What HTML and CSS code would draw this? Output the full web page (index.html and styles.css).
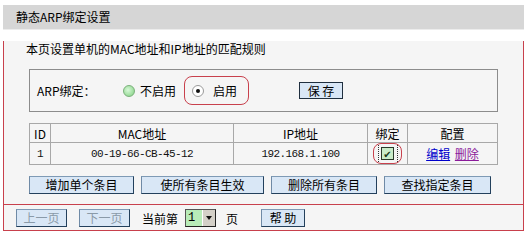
FILE: index.html
```html
<!DOCTYPE html>
<html lang="zh-CN">
<head>
    <meta charset="UTF-8">
    <title>静态ARP绑定设置</title>
    <link rel="stylesheet" href="styles.css">
</head>
<body>
  <div class="panel">
    <div class="title">静态ARP绑定设置</div>
    <div class="main">
      <p class="intro">本页设置单机的MAC地址和IP地址的匹配规则</p>

      <div class="bind-box">
        <span class="label">ARP绑定：</span>
        <label class="opt opt-off"><span class="radio radio-green"></span>不启用</label>
        <label class="opt opt-on"><span class="radio radio-checked"></span>启用</label>
        <button class="btn btn-save">保 存</button>
      </div>

      <table class="arp">
        <tr class="head">
          <th class="c-id">ID</th>
          <th class="c-mac">MAC地址</th>
          <th class="c-ip">IP地址</th>
          <th class="c-bind">绑定</th>
          <th class="c-conf">配置</th>
        </tr>
        <tr class="row">
          <td class="mono">1</td>
          <td class="mono">00-19-66-CB-45-12</td>
          <td class="mono">192.168.1.100</td>
          <td><span class="mark"><span class="focus"><span class="check">✔</span></span></span></td>
          <td><a href="#" class="edit">编辑</a> <a href="#" class="del">删除</a></td>
        </tr>
      </table>

      <div class="actions">
        <button class="btn b1">增加单个条目</button>
        <button class="btn b2">使所有条目生效</button>
        <button class="btn b3">删除所有条目</button>
        <button class="btn b4">查找指定条目</button>
      </div>

      <div class="pager">
        <button class="btn btn-page disabled">上一页</button>
        <button class="btn btn-page disabled">下一页</button>
        <span class="cur">当前第</span>
        <span class="select"><span class="val">1</span><span class="arrow"></span></span>
        <span class="cur">页</span>
        <button class="btn btn-help">帮 助</button>
      </div>
    </div>
  </div>
</body>
</html>
```

FILE: styles.css
```css
body {
    margin: 0;
    background-color: #ffffff;
    font-family: "Noto Sans CJK SC", "DejaVu Sans", sans-serif;
    font-size: 12px;
    color: #000;
}

.panel {
    width: 521px;
    margin: 5px 0 0 3px;
}

.title {
    height: 24px;
    line-height: 24px;
    padding-left: 13px;
    background-color: #d6d6d6;
    border-bottom: 1px solid #ececec;
}

.main {
    background-color: #f5f5f5;
    border: 1px solid #c8404c;
    border-top: none;
}

.intro {
    margin: 11px 0 0 22px;
    line-height: 16px;
}

.bind-box {
    display: flex;
    align-items: center;
    width: 467px;
    height: 41px;
    margin: 12px 0 0 25px;
    border: 1px solid #8c8c8c;
}

.label {
    margin-left: 7px;
    width: 86px;
}

.opt {
    display: flex;
    align-items: center;
    gap: 5px;
}

.opt-off {
    width: 61px;
}

.opt-on {
    width: 56px;
    height: 27px;
    padding-left: 7px;
    border: 1px solid #c8404c;
    border-radius: 8px;
    gap: 9px;
}

.radio {
    display: inline-block;
    width: 10px;
    height: 10px;
    border-radius: 50%;
    border: 1px solid #8a9a8a;
    position: relative;
}

.radio-green {
    background: radial-gradient(circle at 40% 40%, #d8f8d8, #7fd07f);
    border-color: #7ab07a;
}

.radio-checked {
    background-color: #ffffff;
    border-color: #9a9a9a;
}

.radio-checked::after {
    content: "";
    position: absolute;
    left: 3px;
    top: 3px;
    width: 4px;
    height: 4px;
    border-radius: 50%;
    background-color: #111;
}

.btn {
    height: 18px;
    padding: 0;
    font-family: inherit;
    font-size: 12px;
    line-height: 16px;
    background-color: #d9e7f6;
    border: 1px solid #23405c;
    border-top-color: #7e9ab5;
    border-left-color: #6f8aa6;
    color: #000;
}

.btn-save {
    width: 44px;
    height: 17px;
    margin-left: 50px;
    border-color: #1f2f3f;
}

.arp {
    width: 469px;
    margin: 11px 0 0 25px;
    border-collapse: collapse;
    border: 1px solid #9a9a9a;
}

.arp th,
.arp td {
    border: 1px solid #a8a8a8;
    padding: 0;
    text-align: center;
    font-weight: normal;
}

.head {
    height: 19px;
}

.row {
    height: 21px;
}

.c-id { width: 20px; }
.c-mac { width: 182px; }
.c-ip { width: 133px; }
.c-bind { width: 39px; }

.mono {
    font-family: "Liberation Mono", monospace;
    font-size: 11px;
    letter-spacing: -0.6px;
    color: #111;
}

.mark {
    display: inline-flex;
    align-items: center;
    justify-content: center;
    width: 27px;
    height: 19px;
    border: 1px solid #c8404c;
    border-radius: 8px;
    vertical-align: middle;
}

.focus {
    display: inline-flex;
    align-items: center;
    justify-content: center;
    width: 18px;
    height: 17px;
    border-left: 1px dotted #333;
    border-right: 1px dotted #333;
}

.check {
    display: inline-block;
    width: 11px;
    height: 11px;
    line-height: 11px;
    font-size: 10px;
    color: #1a3a1a;
    background-color: #c9ecc9;
    border: 1px solid #2a3a2a;
}

.edit,
.del {
    text-decoration: underline;
}

.edit { color: #0000cc; margin-right: 2px; }
.del { color: #8a1a9a; }

.actions {
    display: flex;
    gap: 7px;
    margin: 11px 0 0 25px;
}

.b1 { width: 105px; }
.b2 { width: 123px; }
.b3 { width: 106px; }
.b4 { width: 107px; }

.pager {
    display: flex;
    align-items: center;
    margin-top: 10px;
    padding: 4px 0 3px 12px;
    border-top: 1px solid #c8404c;
}

.btn-page {
    width: 51px;
    margin-right: 12px;
}

.btn-page.disabled {
    color: #8a9aa8;
}

.cur {
    margin-right: 7px;
}

.select {
    display: inline-flex;
    height: 16px;
    margin-right: 10px;
    border: 1px solid #555;
    border-right-color: #222;
    border-bottom-color: #222;
}

.val {
    width: 14px;
    line-height: 16px;
    padding-left: 2px;
    background-color: #b8ecb8;
    font-family: "Liberation Mono", monospace;
}

.arrow {
    position: relative;
    width: 12px;
    background-color: #d4d0c8;
    border-left: 1px solid #fff;
}

.arrow::after {
    content: "";
    position: absolute;
    left: 3px;
    top: 6px;
    border-left: 3px solid transparent;
    border-right: 3px solid transparent;
    border-top: 4px solid #111;
}

.btn-help {
    width: 44px;
    margin-left: 16px;
}
```
